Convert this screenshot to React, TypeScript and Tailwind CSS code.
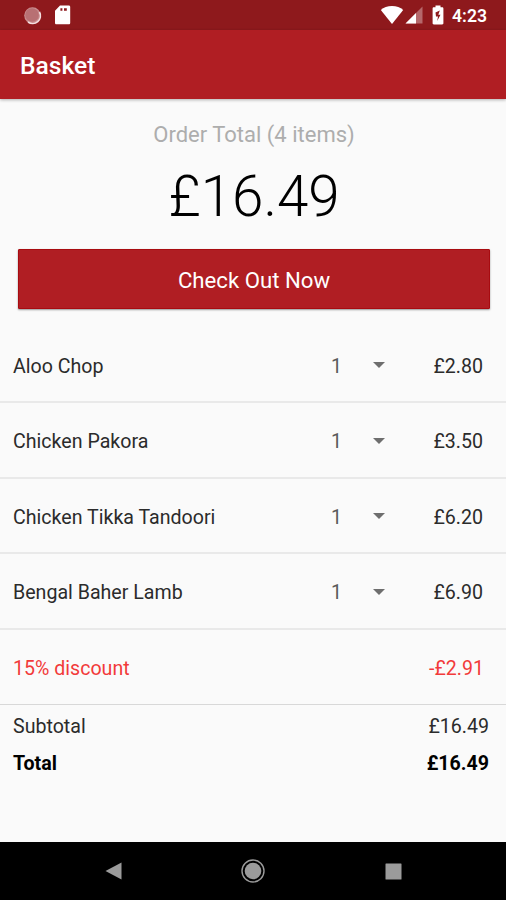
import { useState } from "react";

const initialItems = [
  { name: "Aloo Chop", quantity: 1, price: "£2.80" },
  { name: "Chicken Pakora", quantity: 1, price: "£3.50" },
  { name: "Chicken Tikka Tandoori", quantity: 1, price: "£6.20" },
  { name: "Bengal Baher Lamb", quantity: 1, price: "£6.90" },
];

function StatusBar() {
  return (
    <div className="flex h-[30px] shrink-0 items-center bg-[#8e191c] pl-[23px] pr-[19px] text-white">
      {/* Notifications */}
      <svg width="19" height="19" viewBox="0 0 19 19">
        <circle cx="9.5" cy="9.5" r="8.3" fill="#c98d8f" />
        <circle cx="9" cy="9" r="6.8" fill="#b87073" />
        <path d="M16.5 6A7.8 7.8 0 0 1 5 16" fill="none" stroke="#f3dfe0" strokeWidth="1.6" />
      </svg>
      <svg className="ml-3" width="17" height="20" viewBox="0 0 17 20">
        <path
          fill="#fff"
          fillRule="evenodd"
          d="M6 .5h8.800c.8 0 1.400.6 1.400 1.400v16c0 .8-.6 1.400-1.400 1.400H2.400c-.8 0-1.400-.6-1.400-1.400V5.800zM6.400 3.200v2.600h2V3.200zm3.600 0v2.600h2.800V3.200z"
        />
      </svg>

      {/* System icons */}
      <svg className="ml-auto" width="24" height="18" viewBox="0 0 24 18">
        <path d="M12 18 .8 4C3.600 1.600 7.500 0 12 0s8.400 1.600 11.200 4z" fill="#fff" />
      </svg>
      <svg className="ml-[1px]" width="18" height="18" viewBox="0 0 18 18">
        <path d="M17.500.5v17H.5z" fill="#b5686b" />
        <path d="M11 7v10.500H.5z" fill="#fff" />
      </svg>
      <svg className="ml-[9px]" width="12" height="20" viewBox="0 0 12 20">
        <path
          fill="#fff"
          d="M3.500 2.200V.5h5v1.700h1.700c.7 0 1.200.5 1.200 1.200v14.800c0 .7-.5 1.200-1.200 1.200H1.800c-.7 0-1.200-.5-1.200-1.200V3.400c0-.7.5-1.200 1.200-1.200z"
        />
        <path d="M7.800 5.500 3.500 7.500 4 11.500h2l-.8 4.500 3.300-6.200H6.300z" fill="#8e191c" />
      </svg>
      <span className="ml-[8px] pt-[3px] text-[17.6px] font-semibold leading-none">4:23</span>
    </div>
  );
}

function NavigationBar() {
  return (
    <div className="flex h-[58px] shrink-0 items-center justify-between bg-black px-[104px] text-[#9b9b9b]">
      <svg width="18" height="18" viewBox="0 0 18 18" fill="currentColor">
        <path d="M17.500.5v17L1.500 9z" />
      </svg>
      <svg width="24" height="24" viewBox="0 0 24 24">
        <circle cx="12" cy="12" r="11" fill="none" stroke="currentColor" strokeWidth="1.4" />
        <circle cx="12" cy="12" r="8.3" fill="currentColor" />
      </svg>
      <svg width="18" height="17" viewBox="0 0 18 17" fill="currentColor">
        <rect x="1.5" y=".5" width="16" height="16" rx=".5" />
      </svg>
    </div>
  );
}

export default function App() {
  const [items] = useState(initialItems);

  return (
    <div className="flex h-[900px] w-[506px] flex-col overflow-hidden bg-[#fafafa] font-['Roboto',sans-serif] text-[19.6px] text-[#2b2b2b]">
      <StatusBar />

      <header className="flex h-[69px] shrink-0 items-center bg-[#b01e23] pl-5 pt-[3px] shadow-[0_1px_3px_rgba(0,0,0,0.3)]">
        <h1 className="text-[24.6px] font-medium leading-none text-white">Basket</h1>
      </header>

      <main className="flex grow flex-col">
        {/* Order total */}
        <section className="flex flex-col items-center pl-[18px] pr-4 pt-[21px]">
          <p className="text-[22px] leading-[30px] text-[#adadad]">
            Order Total ({items.length} items)
          </p>
          <p className="mt-3 text-[56.5px] font-light leading-[70px] text-black">£16.49</p>
          <button className="mt-[17px] h-[60px] w-full rounded-[1px] border border-[#a80b10] bg-[#b01e23] pt-[3px] text-[22.2px] text-white shadow-[0_1px_2px_rgba(0,0,0,0.4)]">
            Check Out Now
          </button>
        </section>

        {/* Items */}
        <ul className="mt-[18.5px]">
          {items.map((item) => (
            <li
              key={item.name}
              className="flex h-[75.5px] items-center border-b-2 border-[#e9e9e9] pl-[13px] pr-[23px] pt-1"
            >
              <span className="grow">{item.name}</span>
              <span className="text-[#5a5a5a]">{item.quantity}</span>
              <svg className="-mt-[2px] ml-[31px]" width="12" height="6" viewBox="0 0 12 6">
                <path d="M0 0h12L6 6z" fill="#6e6e6e" />
              </svg>
              <span className="w-[98px] text-right">{item.price}</span>
            </li>
          ))}
          <li className="flex h-[75.5px] items-center justify-between border-b border-[#d8d8d8] pl-[13px] pr-[22px] pt-[3px] text-[#f23a3a]">
            <span>15% discount</span>
            <span>-£2.91</span>
          </li>
        </ul>

        {/* Totals */}
        <div className="flex flex-col gap-[7px] pl-[13px] pr-[17px] pt-[6.5px] leading-[30px]">
          <div className="flex justify-between">
            <span>Subtotal</span>
            <span>£16.49</span>
          </div>
          <div className="flex justify-between font-bold text-black">
            <span>Total</span>
            <span>£16.49</span>
          </div>
        </div>
      </main>

      <NavigationBar />
    </div>
  );
}
